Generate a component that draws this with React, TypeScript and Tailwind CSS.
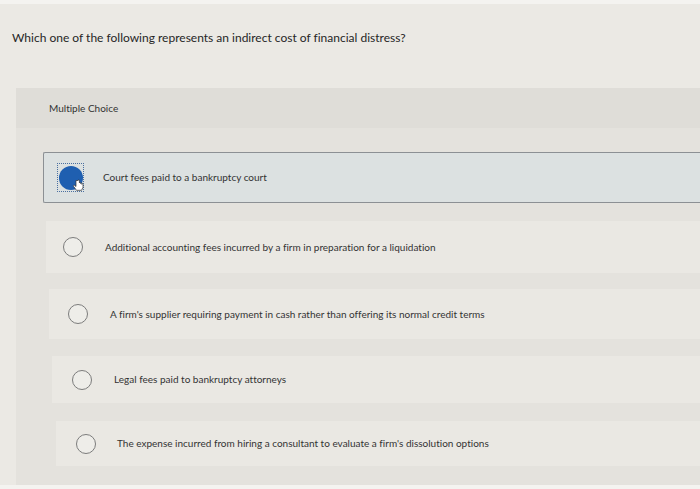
import React from "react";

const options = [
  { text: "Additional accounting fees incurred by a firm in preparation for a liquidation", gap: "ml-[22px]", band: "h-[52px] mt-[18px] ml-[30px]", rl: "ml-[17px]" },
  { text: "A firm's supplier requiring payment in cash rather than offering its normal credit terms", gap: "ml-[22px]", band: "h-[50px] mt-[16px] ml-[33px]", rl: "ml-[19px]" },
  { text: "Legal fees paid to bankruptcy attorneys", gap: "ml-[22px]", band: "h-[47px] mt-[17px] ml-[36px]", rl: "ml-[20px]" },
  { text: "The expense incurred from hiring a consultant to evaluate a firm's dissolution options", gap: "ml-[21px]", band: "h-[45px] mt-[18px] ml-[40px]", rl: "ml-[20px]" },
];

function Radio() {
  return <div className="w-[20px] h-[20px] rounded-full border-[1.5px] border-[#7c7c7c] bg-[#eeede9] shrink-0" />;
}

export default function App() {
  return (
    <div className="w-[700px] h-[489px] bg-[#ebe9e4] overflow-hidden flex flex-col text-[#2f2f2f] [font-variant-ligatures:none]" style={{ fontFamily: "Lato, 'Open Sans', sans-serif" }}>
      <div className="h-[4px] bg-[#f4f3f0]" />
      <div className="pl-[12px] pt-[26px] text-[12px] leading-[16px] text-[#262626]">
        Which one of the following represents an indirect cost of financial distress?
      </div>
      <div className="mt-[42px] ml-[16px] flex-1 bg-[#e4e2dd] flex flex-col">
        <div className="h-[40px] bg-[#dfddd8] flex items-center pl-[33px] text-[10px] text-[#333]">
          Multiple Choice
        </div>
        <div className="mt-[24px] ml-[27px] h-[51px] bg-[#dce1e1] border border-[#8c9094] rounded-l-[2px] border-r-0 flex items-center">
          <div className="ml-[13px] w-[27px] h-[29px] border border-dotted border-[#4a6fa0] flex items-center justify-center relative">
            <div className="w-[24px] h-[24px] rounded-full bg-[#1f5fb0]" />
            <svg className="absolute right-[-1px] bottom-[-1px]" width="12" height="13" viewBox="0 0 12 13">
              <path d="M4 1.5 v6 l-1.5 -1.2 c-0.8 -0.5 -1.6 0.3 -1 1 l3 4 h5 l1.5 -3 v-3 c0 -0.8 -1.2 -0.8 -1.2 0 v-0.8 c0 -0.8 -1.2 -0.8 -1.2 0 v-0.6 c0 -0.8 -1.2 -0.8 -1.2 0 v-2.4 c0 -0.8 -1.4 -0.8 -1.4 0 z" fill="#fff" stroke="#333" strokeWidth="0.7" />
            </svg>
          </div>
          <span className="ml-[19px] text-[10px] text-[#333]">Court fees paid to a bankruptcy court</span>
        </div>
        {options.map((o, i) => (
          <div key={i} className={`${o.band} bg-[#eae8e3] flex items-center`}>
            <div className={`${o.rl} flex items-center`}>
              <Radio />
              <span className={`${o.gap} text-[10px] text-[#333]`}>{o.text}</span>
            </div>
          </div>
        ))}
        <div className="flex-1" />
      </div>
      <div className="h-[4px] bg-[#f4f3f0]" />
    </div>
  );
}
